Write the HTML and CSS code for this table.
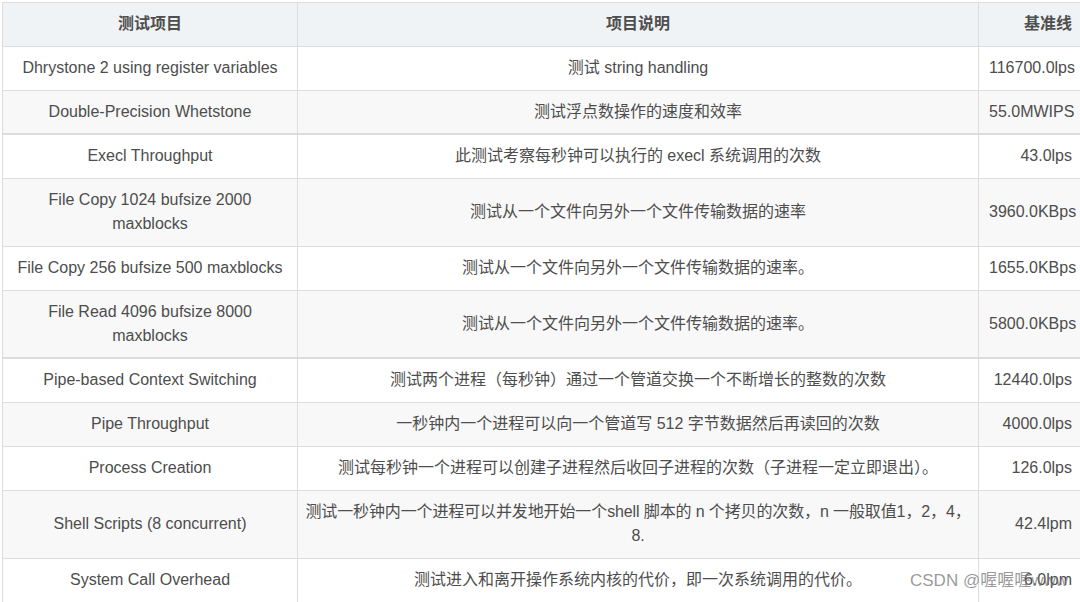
FILE: index.html
```html
<!DOCTYPE html>
<html lang="zh-CN">
<head>
<meta charset="utf-8">
<title>UnixBench 测试项目</title>
<link rel="stylesheet" href="styles.css">
</head>
<body>
<div class="page">
  <table class="bench">
    <colgroup>
      <col class="c1">
      <col class="c2">
      <col class="c3">
    </colgroup>
    <thead>
      <tr>
        <th class="center">测试项目</th>
        <th class="center desc">项目说明</th>
        <th class="right">基准线</th>
      </tr>
    </thead>
    <tbody>
      <tr><td class="center">Dhrystone 2 using register variables</td><td class="center desc">测试 string handling</td><td class="right">116700.0lps</td></tr>
      <tr class="sep"><td class="center">Double-Precision Whetstone</td><td class="center desc">测试浮点数操作的速度和效率</td><td class="right">55.0MWIPS</td></tr>
      <tr><td class="center">Execl Throughput</td><td class="center desc">此测试考察每秒钟可以执行的 execl 系统调用的次数</td><td class="right">43.0lps</td></tr>
      <tr><td class="center">File Copy 1024 bufsize 2000 maxblocks</td><td class="center desc">测试从一个文件向另外一个文件传输数据的速率</td><td class="right">3960.0KBps</td></tr>
      <tr><td class="center">File Copy 256 bufsize 500 maxblocks</td><td class="center desc">测试从一个文件向另外一个文件传输数据的速率。</td><td class="right">1655.0KBps</td></tr>
      <tr class="sep"><td class="center">File Read 4096 bufsize 8000 maxblocks</td><td class="center desc">测试从一个文件向另外一个文件传输数据的速率。</td><td class="right">5800.0KBps</td></tr>
      <tr><td class="center">Pipe-based Context Switching</td><td class="center desc">测试两个进程（每秒钟）通过一个管道交换一个不断增长的整数的次数</td><td class="right">12440.0lps</td></tr>
      <tr><td class="center">Pipe Throughput</td><td class="center desc">一秒钟内一个进程可以向一个管道写 512 字节数据然后再读回的次数</td><td class="right">4000.0lps</td></tr>
      <tr><td class="center">Process Creation</td><td class="center desc">测试每秒钟一个进程可以创建子进程然后收回子进程的次数（子进程一定立即退出）。</td><td class="right">126.0lps</td></tr>
      <tr><td class="center">Shell Scripts (8 concurrent)</td><td class="center desc tight">测试一秒钟内一个进程可以并发地开始一个shell 脚本的 n 个拷贝的次数，n 一般取值1，2，4，8.</td><td class="right">42.4lpm</td></tr>
      <tr><td class="center">System Call Overhead</td><td class="center desc">测试进入和离开操作系统内核的代价，即一次系统调用的代价。</td><td class="right">6.0lpm</td></tr>
    </tbody>
  </table>
  <div class="watermark">CSDN @喔喔喔www</div>
</div>
</body>
</html>
```

FILE: styles.css
```css
html, body {
  margin: 0;
  padding: 0;
  background: #ffffff;
  overflow: hidden;
}

.page {
  width: 1080px;
  height: 602px;
  overflow: hidden;
  position: relative;
  padding: 2px 0 0 2px;
  box-sizing: border-box;
}

.bench {
  border-collapse: collapse;
  table-layout: fixed;
  width: 1088px;
  font-family: "Liberation Sans", Arial, "Noto Sans CJK SC", sans-serif;
  font-size: 16px;
  line-height: 24px;
  color: #4d4d4d;
}

.c1 { width: 295px; }
.c2 { width: 681px; }
.c3 { width: 112px; }

.bench th,
.bench td {
  border: 1px solid #dddddd;
  padding: 9px 8px 10px 8px;
  vertical-align: middle;
}

.bench th.desc,
.bench td.desc {
  padding-left: 3px;
  padding-right: 3px;
}

.bench th.right,
.bench td.right {
  padding-left: 10px;
  padding-right: 18px;
}

.bench td.tight {
  letter-spacing: -0.12px;
}

.bench th {
  background: #eff3f5;
  font-weight: bold;
  color: #4f4f4f;
}

.bench tbody tr:nth-child(even) td {
  background: #f8f8f8;
}

.bench tr.sep td {
  border-bottom: 2px solid #dddddd;
  padding-bottom: 9px;
}

.center { text-align: center; }
.right { text-align: right; }

.watermark {
  position: absolute;
  left: 910px;
  top: 569px;
  font-family: "Liberation Sans", Arial, "Noto Sans CJK SC", sans-serif;
  font-size: 17px;
  line-height: 24px;
  color: rgba(120, 120, 120, 0.75);
  white-space: nowrap;
}
```
